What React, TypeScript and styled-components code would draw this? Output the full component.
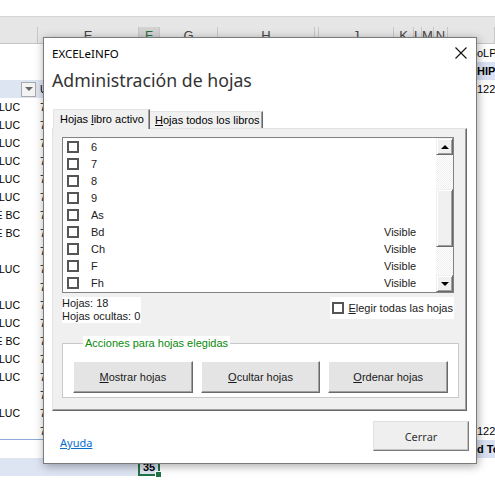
import styled, { createGlobalStyle } from "styled-components";

const GlobalStyle = createGlobalStyle`
  html, body {
    margin: 0;
    padding: 0;
    background: #fff;
    overflow: hidden;
  }
`;

const Screen = styled.div`
  position: relative;
  width: 495px;
  height: 491px;
  overflow: hidden;
  background: #fff;
  font-family: "Liberation Sans", Arial, sans-serif;
`;

/* ---------- spreadsheet behind the dialog ---------- */

const TopStrip = styled.div`
  height: 16px;
  border-bottom: 1px solid #d5d5d5;
`;

const ColHeader = styled.div`
  display: flex;
  box-sizing: border-box;
  height: 27px;
  padding-top: 10px;
  background: #e6e6e6;
  border-bottom: 1px solid #c6c6c6;
`;

const ColCell = styled.div<{ $w: number; $sel?: boolean }>`
  flex: 0 0 ${(p) => p.$w}px;
  min-width: 0;
  display: flex;
  justify-content: center;
  box-sizing: border-box;
  height: 16px;
  line-height: 18px;
  font-size: 13px;
  white-space: nowrap;
  border-right: 1px solid #c8c8c8;
  color: ${(p) => (p.$sel ? "#1f6e43" : "#444")};
  background: ${(p) => (p.$sel ? "#d2d2d2" : "transparent")};
`;

const SheetRow = styled.div`
  display: flex;
  height: 18px;
  font-size: 10.5px;
  line-height: 18px;
  color: #000;
`;

const LeftPart = styled.div<{ $band?: boolean; $line?: boolean }>`
  display: flex;
  flex: 0 0 138px;
  box-sizing: border-box;
  background: ${(p) => (p.$band ? "#dde4f2" : "transparent")};
  border-bottom: ${(p) => (p.$line ? "1px solid #8ea9db" : "none")};
`;

const NameCell = styled.div`
  flex: 0 0 20px;
  min-width: 0;
  display: flex;
  justify-content: flex-end;
  white-space: nowrap;
  span {
    flex: none;
  }
`;

const FilterCell = styled.div`
  flex: 0 0 18px;
  display: flex;
  align-items: center;
`;

const FilterButton = styled.div`
  box-sizing: border-box;
  width: 15px;
  height: 15px;
  margin-left: 1px;
  border: 1px solid #a9a9a9;
  background: #f3f3f3;
  display: flex;
  align-items: center;
  justify-content: center;
`;

const DownTriangle = styled.div<{ $c?: string }>`
  width: 0;
  height: 0;
  border-left: 4px solid transparent;
  border-right: 4px solid transparent;
  border-top: 4px solid ${(p) => p.$c || "#666"};
`;

const UpTriangle = styled.div`
  width: 0;
  height: 0;
  border-left: 4px solid transparent;
  border-right: 4px solid transparent;
  border-bottom: 4px solid #000;
`;

const NumCell = styled.div`
  flex: 1;
  min-width: 0;
  padding-left: 2px;
  white-space: nowrap;
`;

const SelCell = styled.div<{ $active?: boolean }>`
  position: relative;
  flex: 0 0 22px;
  box-sizing: border-box;
  text-align: center;
  font-weight: bold;
  font-size: 11px;
  line-height: 15px;
  ${(p) =>
    p.$active
      ? "border: 2px solid #217346; background: #dde4f2;"
      : ""}
`;

const FillHandle = styled.div`
  position: absolute;
  right: -4px;
  bottom: -4px;
  width: 5px;
  height: 5px;
  background: #217346;
  border: 1px solid #fff;
`;

const Spacer = styled.div`
  flex: 1;
`;

const RightCell = styled.div<{ $band?: boolean; $bold?: boolean }>`
  flex: 0 0 19px;
  box-sizing: border-box;
  padding-left: 1px;
  overflow: hidden;
  white-space: nowrap;
  font-size: 11px;
  font-weight: ${(p) => (p.$bold ? "bold" : "normal")};
  background: ${(p) => (p.$band ? "#d9e1f2" : "transparent")};
`;

/* ---------- dialog ---------- */

const Dialog = styled.section`
  position: absolute;
  left: 43px;
  top: 37px;
  width: 434px;
  height: 427px;
  box-sizing: border-box;
  padding: 0 7px 0 8px;
  display: flex;
  flex-direction: column;
  background: #fff;
  border: 1px solid #7a7a7a;
  box-shadow: 1px 2px 9px rgba(0, 0, 0, 0.35);
  font-family: "Liberation Sans", Arial, sans-serif;
  font-size: 11px;
  color: #1a1a1a;
`;

const TitleBar = styled.div`
  height: 30px;
  display: flex;
  align-items: center;
  justify-content: space-between;
  font-family: "Noto Sans", sans-serif;
  font-size: 11.5px;
  color: #000;
`;

const CloseIcon = styled.svg`
  margin-right: 2px;
`;

const Heading = styled.h1`
  margin: 0;
  height: 24px;
  line-height: 24px;
  font-family: "Noto Sans", sans-serif;
  font-weight: normal;
  font-size: 17.7px;
  color: #333;
`;

const TabStrip = styled.div`
  display: flex;
  align-items: flex-start;
  height: 19px;
  margin-top: 17px;
  padding-left: 1px;
  z-index: 1;
`;

const Tab = styled.div<{ $active?: boolean }>`
  box-sizing: border-box;
  width: ${(p) => (p.$active ? 97 : 113)}px;
  height: ${(p) => (p.$active ? 20 : 17)}px;
  margin-top: ${(p) => (p.$active ? 0 : 2)}px;
  padding-left: ${(p) => (p.$active ? 6 : 4)}px;
  line-height: ${(p) => (p.$active ? 18 : 16)}px;
  background: #f0f0f0;
  border-top: 1px solid #e3e3e3;
  border-left: 1px solid ${(p) => (p.$active ? "#e3e3e3" : "#f0f0f0")};
  border-right: 1px solid #696969;
  box-shadow: inset -1px 0 #a0a0a0;
  color: #000;
  white-space: nowrap;
`;

const Mn = styled.span`
  text-decoration: underline;
`;

const Panel = styled.div`
  box-sizing: border-box;
  width: 415px;
  height: 283px;
  padding: 8px 0 0 9px;
  background: #f0f0f0;
  border: 1px solid;
  border-color: #e3e3e3 #696969 #696969 #e3e3e3;
  box-shadow: inset -1px -1px #a0a0a0;
`;

const ListBox = styled.div`
  box-sizing: border-box;
  width: 392px;
  height: 156px;
  display: flex;
  background: #fff;
  border: 1px solid #828282;
`;

const Items = styled.div`
  flex: 1;
`;

const Item = styled.div`
  display: flex;
  align-items: center;
  height: 17px;
  color: #222;
`;

const Check = styled.div<{ $m?: number }>`
  box-sizing: border-box;
  flex: 0 0 12px;
  width: 12px;
  height: 12px;
  margin-left: ${(p) => p.$m ?? 4}px;
  border: 2px solid #555;
  background: #fff;
`;

const ItemName = styled.div`
  flex: 0 0 293px;
  margin-left: 12px;
`;

const ItemState = styled.div`
  flex: 1;
`;

const ScrollBar = styled.div`
  flex: 0 0 17px;
  display: flex;
  flex-direction: column;
`;

const ScrollButton = styled.div`
  box-sizing: border-box;
  height: 17px;
  display: flex;
  align-items: center;
  justify-content: center;
  background: #f0f0f0;
  border: 1px solid;
  border-color: #f0f0f0 #696969 #696969 #f0f0f0;
  box-shadow: inset 1px 1px #fff, inset -1px -1px #a0a0a0;
`;

const Track = styled.div`
  flex: 1;
  padding-top: 34px;
  background: repeating-conic-gradient(#efefef 0 25%, #fff 0 50%) 0 0 / 2px 2px;
`;

const Thumb = styled.div`
  box-sizing: border-box;
  height: 58px;
  background: #f0f0f0;
  border: 1px solid;
  border-color: #f0f0f0 #696969 #696969 #f0f0f0;
  box-shadow: inset 1px 1px #fff, inset -1px -1px #a0a0a0;
`;

const InfoRow = styled.div`
  width: 392px;
  margin-top: 4px;
  display: flex;
  justify-content: space-between;
  align-items: flex-start;
`;

const InfoBox = styled.div`
  padding-right: 1px;
  line-height: 13px;
  white-space: nowrap;
  background: #fff;
  color: #1a1a1a;
`;

const CheckLabel = styled.div`
  box-sizing: border-box;
  height: 22px;
  padding: 0 1px 0 2px;
  display: flex;
  align-items: center;
  gap: 4px;
  white-space: nowrap;
  background: #fff;
  color: #1a1a1a;
`;

const Frame = styled.fieldset`
  box-sizing: border-box;
  width: 397px;
  margin: 13px 0 0 0;
  padding: 11px 10px 4px 10px;
  border: 1px solid #c9c9c9;
  background: #fff;
  min-inline-size: 0;
`;

const Legend = styled.legend`
  margin-left: 10px;
  padding: 0 2px;
  line-height: 14px;
  color: #0a8a0a;
  background: #fff;
`;

const Actions = styled.div`
  display: flex;
  gap: 8px;
`;

const ActionButton = styled.div`
  flex: 1;
  box-sizing: border-box;
  height: 32px;
  display: flex;
  align-items: center;
  justify-content: center;
  background: #e4e4e4;
  border: 1px solid;
  border-color: #fff #696969 #696969 #fff;
  box-shadow: inset -1px -1px #a0a0a0;
  color: #1a1a1a;
`;

const Footer = styled.div`
  margin-top: 10px;
  height: 30px;
  display: flex;
  align-items: flex-end;
  justify-content: space-between;
  font-family: "Noto Sans", sans-serif;
  font-size: 11px;
`;

const HelpLink = styled.a`
  margin-left: 8px;
  line-height: 16px;
  color: #0a6ed1;
  text-decoration: underline;
`;

const CloseButton = styled.div`
  box-sizing: border-box;
  width: 96px;
  height: 30px;
  display: flex;
  align-items: center;
  justify-content: center;
  background: #efefef;
  border: 1px solid;
  border-color: #e0e0e0 #7a7a7a #7a7a7a #e0e0e0;
  box-shadow: inset -1px -1px #c4c4c4;
  color: #333;
`;

/* ---------- data ---------- */

const columns: { w: number; label: string; sel?: boolean }[] = [
  { w: 38, label: "" },
  { w: 101, label: "E" },
  { w: 21, label: "F", sel: true },
  { w: 58, label: "G" },
  { w: 97, label: "H" },
  { w: 4, label: "" },
  { w: 75, label: "J" },
  { w: 20, label: "K" },
  { w: 8, label: "L" },
  { w: 12, label: "M" },
  { w: 14, label: "N" },
  { w: 47, label: "" },
];

type SheetLine = {
  name?: string;
  num?: string;
  header?: boolean;
  band?: boolean;
  line?: boolean;
  total?: string;
  right?: string;
  rightBand?: boolean;
  rightBold?: boolean;
};

const leftNames = [
  "LUC", "LUC", "GLUC", "LUC", "GLUC", "LUC", "E BC", "E BC", "",
  "LUC", "", "GLUC", "LUC", "E BC", "LUC", "LUC", "", "LUC", "",
];

const sheetLines: SheetLine[] = [
  { right: "oLP" },
  { right: "HIPI", rightBand: true, rightBold: true },
  { header: true, band: true, num: "U", right: "122" },
  ...leftNames.map((name, i) => ({
    name,
    num: "7",
    line: i === leftNames.length - 1,
    right: i === leftNames.length - 1 ? "122" : undefined,
  })),
  { right: "d To", rightBand: true, rightBold: true },
  { band: true, total: "35" },
  {},
];

const sheets = [
  { name: "6", state: "" },
  { name: "7", state: "" },
  { name: "8", state: "" },
  { name: "9", state: "" },
  { name: "As", state: "" },
  { name: "Bd", state: "Visible" },
  { name: "Ch", state: "Visible" },
  { name: "F", state: "Visible" },
  { name: "Fh", state: "Visible" },
];

export default function App() {
  return (
    <Screen>
      <GlobalStyle />
      <TopStrip />
      <ColHeader>
        {columns.map((c, i) => (
          <ColCell key={i} $w={c.w} $sel={c.sel}>
            {c.label}
          </ColCell>
        ))}
      </ColHeader>
      {sheetLines.map((r, i) => (
        <SheetRow key={i}>
          <LeftPart $band={r.band} $line={r.line}>
            <NameCell>
              <span>{r.name}</span>
            </NameCell>
            <FilterCell>
              {r.header && (
                <FilterButton>
                  <DownTriangle />
                </FilterButton>
              )}
            </FilterCell>
            <NumCell>{r.num}</NumCell>
          </LeftPart>
          <SelCell $active={!!r.total}>
            {r.total}
            {r.total && <FillHandle />}
          </SelCell>
          <Spacer />
          <RightCell $band={r.rightBand} $bold={r.rightBold}>
            {r.right}
          </RightCell>
        </SheetRow>
      ))}

      <Dialog>
        <TitleBar>
          <span>EXCELeINFO</span>
          <CloseIcon width="12" height="12" viewBox="0 0 12 12">
            <path d="M0.5 0.5 L11.5 11.5 M11.5 0.5 L0.5 11.5" stroke="#111" strokeWidth="1.1" fill="none" />
          </CloseIcon>
        </TitleBar>
        <Heading>Administración de hojas</Heading>
        <TabStrip>
          <Tab $active>
            Hojas <Mn>l</Mn>ibro activo
          </Tab>
          <Tab>
            <Mn>H</Mn>ojas todos los libros
          </Tab>
        </TabStrip>
        <Panel>
          <ListBox>
            <Items>
              {sheets.map((s) => (
                <Item key={s.name}>
                  <Check />
                  <ItemName>{s.name}</ItemName>
                  <ItemState>{s.state}</ItemState>
                </Item>
              ))}
            </Items>
            <ScrollBar>
              <ScrollButton>
                <UpTriangle />
              </ScrollButton>
              <Track>
                <Thumb />
              </Track>
              <ScrollButton>
                <DownTriangle $c="#000" />
              </ScrollButton>
            </ScrollBar>
          </ListBox>
          <InfoRow>
            <InfoBox>
              <div>Hojas: 18</div>
              <div>Hojas ocultas: 0</div>
            </InfoBox>
            <CheckLabel>
              <Check $m={0} />
              <span>
                <Mn>E</Mn>legir todas las hojas
              </span>
            </CheckLabel>
          </InfoRow>
          <Frame>
            <Legend>Acciones para hojas elegidas</Legend>
            <Actions>
              <ActionButton>
                <span>
                  <Mn>M</Mn>ostrar hojas
                </span>
              </ActionButton>
              <ActionButton>
                <span>
                  <Mn>O</Mn>cultar hojas
                </span>
              </ActionButton>
              <ActionButton>
                <span>
                  <Mn>O</Mn>rdenar hojas
                </span>
              </ActionButton>
            </Actions>
          </Frame>
        </Panel>
        <Footer>
          <HelpLink>Ayuda</HelpLink>
          <CloseButton>Cerrar</CloseButton>
        </Footer>
      </Dialog>
    </Screen>
  );
}
